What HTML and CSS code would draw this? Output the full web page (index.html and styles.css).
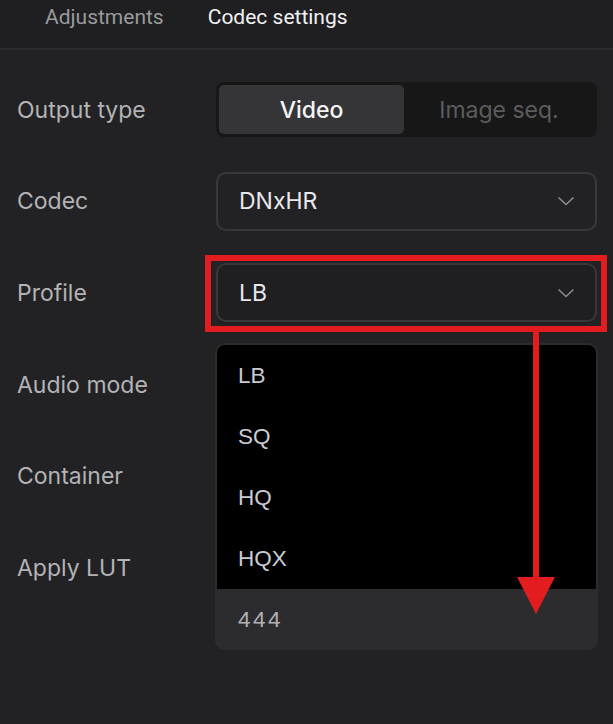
FILE: index.html
```html
<!DOCTYPE html>
<html lang="en">
<head>
  <meta charset="UTF-8" />
  <meta name="viewport" content="width=device-width, initial-scale=1.0" />
  <title>Codec settings</title>
  <link rel="stylesheet" href="styles.css">
</head>
<body>
  <div class="tabs">
    <span class="tab">Adjustments</span>
    <span class="tab active">Codec settings</span>
  </div>

  <div class="settings">
    <div class="row">
      <span class="label">Output type</span>
      <div class="segmented">
        <span class="seg active">Video</span>
        <span class="seg">Image seq.</span>
      </div>
    </div>

    <div class="row">
      <span class="label">Codec</span>
      <div class="select">
        <span>DNxHR</span>
        <svg class="chevron" width="18" height="10" viewBox="0 0 18 10"><path d="M1.5 1.5 L9 8.5 L16.5 1.5" fill="none" stroke="#8c8c8e" stroke-width="1.6"/></svg>
      </div>
    </div>

    <div class="row">
      <span class="label">Profile</span>
      <div class="control">
        <div class="select open">
          <span>LB</span>
          <svg class="chevron" width="18" height="10" viewBox="0 0 18 10"><path d="M1.5 1.5 L9 8.5 L16.5 1.5" fill="none" stroke="#8c8c8e" stroke-width="1.6"/></svg>
        </div>
        <div class="highlight"></div>
        <div class="menu">
          <ul class="options">
            <li>LB</li>
            <li>SQ</li>
            <li>HQ</li>
            <li>HQX</li>
          </ul>
          <div class="option hover">444</div>
        </div>
        <div class="arrow">
          <div class="shaft"></div>
          <div class="head"></div>
        </div>
      </div>
    </div>

    <div class="row"><span class="label">Audio mode</span></div>
    <div class="row"><span class="label">Container</span></div>
    <div class="row"><span class="label">Apply LUT</span></div>
  </div>
</body>
</html>
```

FILE: styles.css
```css
* { box-sizing: border-box; }
body {
  margin: 0;
  background: #222224;
  font-family: Inter, "Noto Sans", sans-serif;
  height: 724px;
  overflow: hidden;
}

.tabs {
  height: 50px;
  background: #1f1f21;
  border-bottom: 2px solid #2a2a2c;
  display: flex;
  gap: 44px;
  padding: 5px 0 0 45px;
}
.tab {
  font-family: Roboto, sans-serif;
  font-size: 21px;
  color: #9a9a9c;
}
.tab.active { color: #f2f2f4; }

.settings { padding-top: 14px; }
.row {
  height: 91.6px;
  display: grid;
  grid-template-columns: 216px 381px;
  align-items: center;
}
.label {
  padding-left: 17px;
  font-size: 23px;
  color: #b3b3b6;
}

.segmented {
  height: 55px;
  background: #171717;
  border-radius: 8px;
  padding: 3px;
  display: grid;
  grid-template-columns: 185px 1fr;
}
.seg {
  display: flex;
  align-items: center;
  justify-content: center;
  font-size: 23px;
  color: #5c5c5e;
  border-radius: 5px;
}
.seg.active {
  background: #353537;
  color: #f4f4f6;
  font-weight: 500;
}

.control { position: relative; }
.select {
  height: 59px;
  border: 2px solid #38383a;
  border-radius: 10px;
  display: flex;
  align-items: center;
  justify-content: space-between;
  padding: 0 20px 0 21px;
  font-size: 23px;
  color: #e6e8ee;
}
.select.open { background: #1f1f21; }

.menu {
  position: absolute;
  left: -1px;
  top: 80px;
  width: 383px;
  background: #2c2c2e;
  border-radius: 10px;
  padding: 2px 2px 0;
  overflow: hidden;
  z-index: 1;
}
.options {
  list-style: none;
  margin: 0;
  padding: 0;
  background: #000;
  border-radius: 8px 8px 0 0;
}
.options li, .option {
  height: 61px;
  display: flex;
  align-items: center;
  padding-left: 21px;
  font-family: "Liberation Sans", Arial, sans-serif;
  font-size: 22.5px;
  color: #c9ccd4;
}
.option.hover {
  color: #b2b2b4;
  letter-spacing: 2.5px;
}

.highlight {
  position: absolute;
  left: -11px;
  top: -8px;
  width: 402px;
  height: 77px;
  border: 6px solid #e21c1f;
  z-index: 2;
}
.arrow {
  position: absolute;
  left: 301px;
  top: 68px;
  width: 38px;
  z-index: 2;
  display: flex;
  flex-direction: column;
  align-items: center;
}
.shaft {
  width: 6px;
  height: 248px;
  background: #e21c1f;
}
.head {
  width: 0;
  height: 0;
  margin-top: -2px;
  border-left: 19px solid transparent;
  border-right: 19px solid transparent;
  border-top: 37px solid #e21c1f;
}
```
